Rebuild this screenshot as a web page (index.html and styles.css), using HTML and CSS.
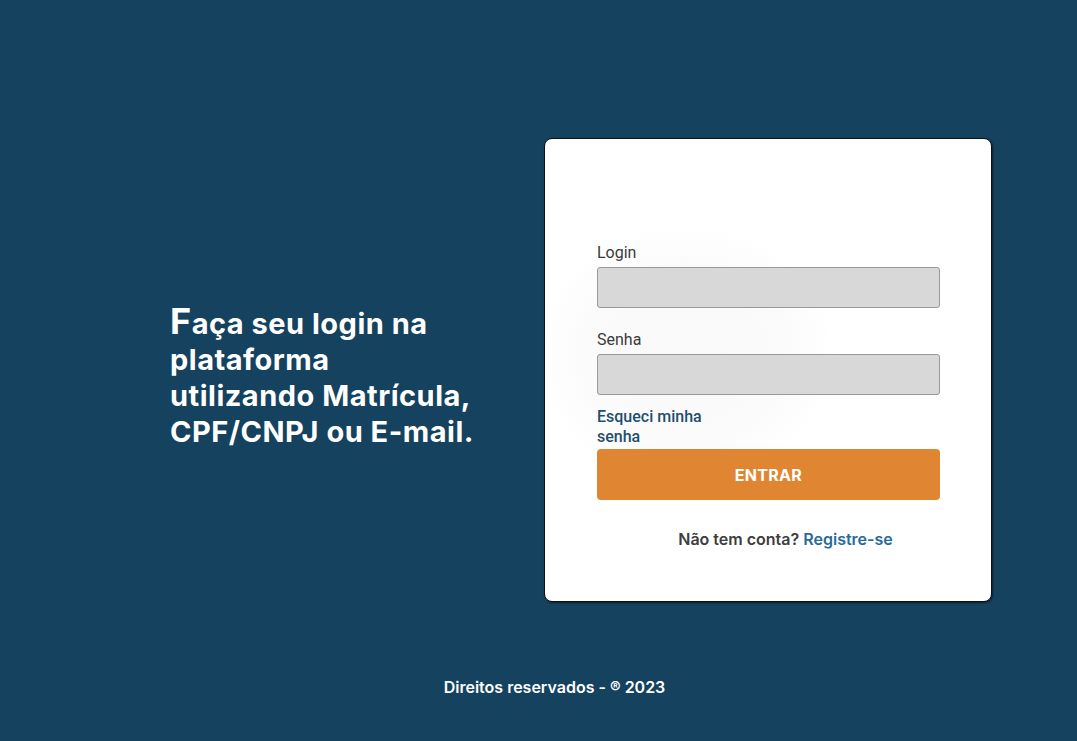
FILE: index.html
```html
<!DOCTYPE html>
<html lang="pt-BR">
<head>
<meta charset="utf-8">
<title>Login</title>
<link rel="stylesheet" href="styles.css">
</head>
<body>
<div class="page">
  <main class="main">
    <section class="intro">
      <h1 class="headline">Faça seu login na<br>plataforma<br>utilizando Matrícula,<br>CPF/CNPJ ou E-mail.</h1>
    </section>
    <section class="card">
      <form class="form">
        <label class="label" for="login">Login</label>
        <input class="field" id="login" type="text">
        <label class="label label-second" for="senha">Senha</label>
        <input class="field" id="senha" type="password">
        <a class="forgot" href="#">Esqueci minha senha</a>
        <button class="btn" type="button">ENTRAR</button>
        <p class="register">Não tem conta? <a href="#" class="register-link">Registre-se</a></p>
      </form>
    </section>
  </main>
  <footer class="footer">Direitos reservados - ® 2023</footer>
</div>
</body>
</html>
```
FILE: styles.css
```css
* { box-sizing: border-box; }
html, body { margin: 0; padding: 0; }
body {
  background: #15425f;
  font-family: Inter, "Noto Sans", sans-serif;
  width: 1077px;
  height: 741px;
  overflow: hidden;
}
.page {
  display: flex;
  flex-direction: column;
  height: 741px;
}
.main {
  display: flex;
  align-items: center;
  padding: 138px 0 0 170px;
}
.intro {
  flex: 0 0 374px;
  padding-top: 12px;
}
.headline {
  margin: 0;
  color: #ffffff;
  font-family: Inter, sans-serif;
  font-weight: 700;
  font-size: 29px;
  line-height: 36px;
  letter-spacing: 0.5px;
}
.headline::first-letter {
  font-size: 36px;
}
.card {
  width: 448px;
  height: 464px;
  background: radial-gradient(ellipse 150px 130px at 140px 215px, #f9f9f9 0%, #fbfbfb 70%, #ffffff 100%);
  border: 1px solid #111;
  border-radius: 8px;
  box-shadow: 1px 1px 2px rgba(0,0,0,0.5);
  padding: 104px 51px 0 52px;
}
.form {
  display: flex;
  flex-direction: column;
}
.label {
  font-family: Roboto, sans-serif;
  font-size: 16px;
  line-height: 20px;
  color: #3a3a3a;
  margin-bottom: 4px;
}
.label-second {
  margin-top: 22px;
}
.field {
  height: 41px;
  width: 343px;
  background: #d8d8d8;
  border: 1px solid #999;
  border-radius: 3px;
  margin: 0;
}
.forgot {
  margin-top: 12px;
  width: 120px;
  font-family: Roboto, sans-serif;
  font-weight: 500;
  font-size: 16px;
  line-height: 20px;
  color: #1f4e70;
  text-decoration: none;
}
.btn {
  margin-top: 2px;
  height: 51px;
  width: 343px;
  border: none;
  border-radius: 4px;
  background: #e08632;
  color: #ffffff;
  font-family: Inter, sans-serif;
  font-weight: 700;
  font-size: 16px;
  letter-spacing: 0.3px;
}
.register {
  margin: 29px 0 0;
  padding-left: 34px;
  text-align: center;
  font-family: Inter, sans-serif;
  font-weight: 600;
  font-size: 16px;
  line-height: 20px;
  color: #3d3d3d;
}
.register-link {
  color: #276b9a;
  text-decoration: none;
}
.footer {
  margin-top: 75px;
  padding-left: 32px;
  text-align: center;
  color: #ffffff;
  font-family: Inter, sans-serif;
  font-weight: 600;
  font-size: 16px;
  line-height: 20px;
}
```
